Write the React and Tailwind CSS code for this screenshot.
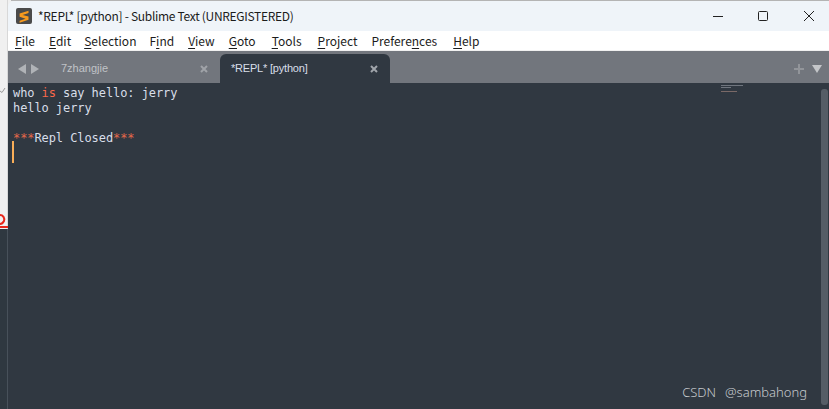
const menus = [
  { before: "", key: "F", after: "ile" },
  { before: "", key: "E", after: "dit" },
  { before: "", key: "S", after: "election", cls: "ml-[-1px]" },
  { before: "F", key: "i", after: "nd", cls: "ml-[-1px]" },
  { before: "", key: "V", after: "iew" },
  { before: "", key: "G", after: "oto" },
  { before: "", key: "T", after: "ools", cls: "ml-[2px]" },
  { before: "", key: "P", after: "roject", cls: "ml-[2px]" },
  { before: "Prefere", key: "n", after: "ces" },
  { before: "", key: "H", after: "elp", cls: "ml-[2px]" },
];

function Logo() {
  return (
    <svg width="16" height="16" viewBox="0 0 16 16" className="shrink-0">
      <rect width="16" height="16" rx="2" fill="#4a4a4a" />
      <path d="M12.5 2.8 3.6 5.6v3.2l6 1.9-6 2v2l8.9-2.9V8.6L6.6 6.9l5.9-1.9z" fill="#f79a1e" />
    </svg>
  );
}

function WindowButtons() {
  return (
    <div className="flex items-center ml-auto h-full">
      <svg width="12" height="12" viewBox="0 0 12 12" className="mr-[33px]">
        <path d="M1 6.5h10" stroke="#222" strokeWidth="1" />
      </svg>
      <svg width="12" height="12" viewBox="0 0 12 12" className="mr-[34px]">
        <rect x="1.5" y="1.5" width="9" height="9" rx="1" fill="none" stroke="#222" strokeWidth="1" />
      </svg>
      <svg width="12" height="12" viewBox="0 0 12 12" className="mr-[14px]">
        <path d="M1 1l10 10M11 1 1 11" stroke="#222" strokeWidth="1" />
      </svg>
    </div>
  );
}

function TabClose({ color }) {
  return (
    <svg width="8" height="8" viewBox="0 0 8 8" className="shrink-0">
      <path d="M1 1l6 6M7 1 1 7" stroke={color} strokeWidth="2" />
    </svg>
  );
}

export default function App() {
  return (
    <div className="flex w-[829px] h-[409px] overflow-hidden bg-[#303841]">
      <div className="flex flex-col w-[8px] shrink-0">
        <div className="relative h-[229px] bg-[#f0f0f0] border-r border-[#d8d8d8]">
          <svg width="8" height="10" viewBox="0 0 8 10" className="absolute left-0 top-[84px]">
            <path d="M0 7l2 1.5L5 4" fill="none" stroke="#9a9a9a" strokeWidth="1" />
          </svg>
          <svg width="8" height="16" viewBox="0 0 8 16" className="absolute left-0 top-[213px]">
            <path d="M0 2c3 0 5 3 4 6-1 2-2 3-4 3M0 14h8" fill="none" stroke="#e8261a" strokeWidth="2" />
          </svg>
        </div>
        <div className="flex-1 bg-[#2f3840] border-r border-[#48515a]"></div>
      </div>

      <div className="flex flex-col flex-1 min-w-0 bg-[#f0f0f0]">
        <div className="h-[1px] bg-[#b4b4b4] ml-[3px]"></div>
        <div className="flex items-center h-[30px] bg-[#eff4f9] pl-[8px] rounded-tl-[6px] font-['Noto_Sans_CJK_SC','Noto_Sans',sans-serif] text-[12px] tracking-[-0.3px] text-[#1c1c1c]">
          <Logo />
          <span className="ml-[6px] whitespace-nowrap">*REPL* [python] - Sublime Text (UNREGISTERED)</span>
          <WindowButtons />
        </div>
        <div className="flex items-center h-[19px] bg-white pl-[7px] gap-[14px] font-['Noto_Sans_CJK_SC','Noto_Sans',sans-serif] text-[12px] text-[#1c1c1c]">
          {menus.map((m) => (
            <span key={m.before + m.key + m.after} className={m.cls}>
              {m.before}
              <span className="underline underline-offset-2">{m.key}</span>
              {m.after}
            </span>
          ))}
        </div>
        <div className="h-[1px] bg-[#f0f0f0]"></div>

        <div className="flex items-end h-[32px] bg-[#72767d] font-['Liberation_Sans',sans-serif] text-[11px] pt-[3px]">
          <div className="flex items-center self-center gap-[5px] pl-[10px] w-[42px] shrink-0">
            <svg width="8" height="10" viewBox="0 0 8 10"><path d="M8 0v10L0 5z" fill="#b0b3b7" /></svg>
            <svg width="8" height="10" viewBox="0 0 8 10"><path d="M0 0v10l8-5z" fill="#b0b3b7" /></svg>
          </div>
          <div className="flex items-center self-center w-[170px] pl-[11px] pr-[12px] text-[#c0c3c7]">
            <span>7zhangjie</span>
            <span className="ml-auto"><TabClose color="#a0a3a8" /></span>
          </div>
          <div className="flex items-center h-full w-[170px] pl-[11px] pr-[12px] bg-[#303841] rounded-t-[6px] text-[#d8dee9]">
            <span className="tracking-[-0.2px]">*REPL* [python]</span>
            <span className="ml-auto"><TabClose color="#a0a5ab" /></span>
          </div>
          <div className="flex items-center self-center ml-auto gap-[8px] pr-[7px]">
            <svg width="10" height="10" viewBox="0 0 10 10"><path d="M5 0v10M0 5h10" stroke="#92959a" strokeWidth="2" /></svg>
            <svg width="10" height="8" viewBox="0 0 10 8"><path d="M0 0h10L5 8z" fill="#c4c6c9" /></svg>
          </div>
        </div>

        <div className="relative flex-1 bg-[#303841] pl-[5px] pt-[3px] font-['DejaVu_Sans_Mono',monospace] text-[12px] leading-[15px] text-[#d8dee9] tracking-[-0.08px]">
          <p>
            who <span className="text-[#f9684a]">is</span> say hello: jerry
          </p>
          <p>hello jerry</p>
          <p>&nbsp;</p>
          <p>
            <span className="text-[#e8694a]">***</span>Repl Closed<span className="text-[#e8694a]">***</span>
          </p>
          <div className="w-[2px] h-[22px] bg-[#f9ae58] mt-[-5px] ml-[-1px]"></div>

          {/* minimap */}
          <div className="absolute left-[713px] top-[2px] w-[24px] flex flex-col gap-[1px] opacity-70">
            <div className="h-[1px] w-[22px] bg-[#8a9099]"></div>
            <div className="h-[1px] w-[10px] bg-[#8a9099]"></div>
            <div className="h-[1px]"></div>
            <div className="h-[1px] w-[16px] bg-[#9a7f78]"></div>
          </div>

          {/* scrollbar */}
          <div className="absolute right-[1px] top-[6px] bottom-[4px] w-[7px] rounded-[3px] bg-[#555d66]"></div>

          <div className="absolute right-[22px] bottom-[7px] flex gap-[9px] font-['Noto_Sans','Liberation_Sans',sans-serif] font-light text-[13px] leading-[20px] tracking-normal text-[#c6cace]">
            <span>CSDN</span>
            <span>@sambahong</span>
          </div>
        </div>
      </div>
    </div>
  );
}
